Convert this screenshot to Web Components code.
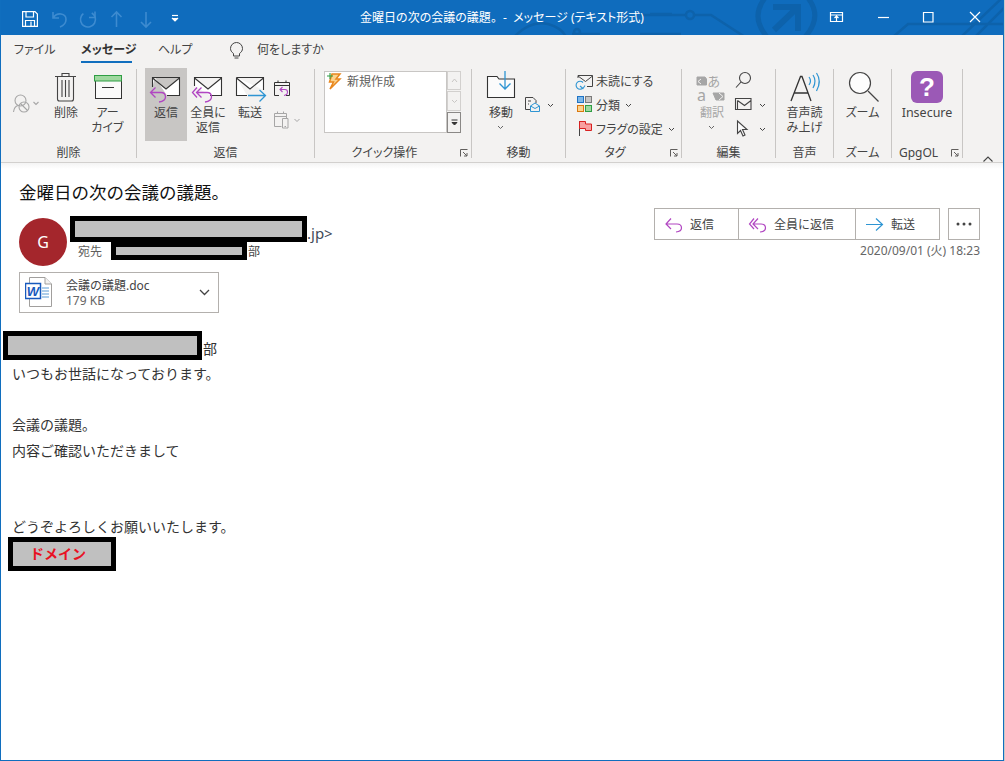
<!DOCTYPE html>
<html lang="ja">
<head>
<meta charset="utf-8">
<title>金曜日の次の会議の議題。</title>
<style>
html,body{margin:0;padding:0;background:#c8c8c8;width:1005px;height:761px;overflow:hidden}
body{font-family:"Noto Sans","Noto Sans CJK JP",sans-serif;font-size:12px;color:#444}
svg{display:block;overflow:visible}
</style>
</head>
<body>
<outlook-window>
  <title-bar>
    <svg slot="pattern" width="1003" height="35" viewBox="1 0 1003 35" fill="none" stroke="#0d62ab" stroke-width="2.5">
      <path d="M640 15H686M694 15H711L745 37"/><circle cx="690" cy="15" r="4"/><path d="M640 34H681"/>
      <path d="M765 -2Q750 17 767 37M808 -2Q823 17 805 37" stroke-width="5"/>
      <path d="M774 30L797 8M773 7H798V31" stroke-width="6"/>
      <path d="M1004 24H908L893 37M1002 -2L961 37M1004 8L975 37"/>
      <path d="M514 37Q530 20 548 24Q562 28 566 37"/><path d="M572 34H600M650 14H672"/><circle cx="577" cy="32" r="3"/>
    </svg>
    <svg slot="left" width="170" height="35" viewBox="15 0 170 35" fill="none" stroke="#fff" stroke-width="1.2">
      <path d="M22.6 11.6H35L37.4 14V26.4H22.6Z"/><path d="M26 11.6V17H33.5V11.6M25.5 26.4V20.5H34.5V26.4M31 21.5V26"/>
      <g stroke="#3d8bd0" stroke-width="1.6"><path d="M53 12V18H59M53.5 17.5C57 12 66 13 66 19.5C66 23 63.5 25.5 60 27"/>
      <circle cx="88" cy="19.500" r="7.500" stroke-dasharray="38 9" transform="rotate(-60 88 19.500)"/><path d="M95 11.500V17.500H89"/>
      <path d="M116.500 27V12M111.500 17L116.500 12L121.500 17M146 12V27M141 22L146 27L151 22"/></g>
      <path d="M172 15.500H178"/><path d="M172 18L175 21L178 18" fill="#fff"/>
    </svg>
    異
    <svg slot="right" width="160" height="35" viewBox="830 0 160 35" fill="none" stroke="#fff" stroke-width="1.2">
      <path d="M835.500 12.500H847.500V21.500H835.500ZM835.500 15H847.500M841.500 21V16.500M839.500 18L841.500 16L843.500 18"/>
      <path d="M883 17.500H894"/><path d="M928.500 12.500H938V22H928.500Z"/><path d="M975 12L985 22M985 12L975 22"/>
    </svg>
  </title-bar>
  <ribbon-tabs>
    <r-tab style="--w:38px;--mr:29px">ファイル</r-tab>
    <r-tab active style="--w:51px;--mr:26px">メッセージ</r-tab>
    <r-tab style="--w:32px;--mr:40px">ヘルプ</r-tab>
    <svg width="13" height="28" viewBox="230 35 13 28" fill="none" stroke="#444" stroke-width="1"><path d="M233.500 56V53.500C231.500 52 230.500 50.500 230.500 48.500A6 6 0 0 1 242.500 48.500C242.500 50.500 241.500 52 239.500 53.500V56ZM234.500 58H238.500"/></svg>
    <r-tab style="--w:66px;--mr:0;--ml:14px">何をしますか</r-tab>
  </ribbon-tabs>
  <ribbon-bar>
    <r-group label="削除" style="--w:136px">
      <svg width="46" height="73" viewBox="1 68 46 73" fill="none" stroke="#a6a6a6" stroke-width="1.1">
        <circle cx="20.500" cy="100.500" r="5.500"/><path d="M13.500 112C14 108 16 106 18 105.500"/><circle cx="24" cy="107" r="5"/><path d="M20.500 103.500L27.500 110.500"/><path d="M33.500 102L36 104.500L38.500 102"/>
      </svg>
      <r-btn style="--w:38px">
        <svg slot="icon" width="38" height="38" viewBox="47 68 38 38" fill="none" stroke="#444" stroke-width="1.1"><path d="M55 76.500H76M62 76V73.500H69V76M57.500 76.500V99Q57.500 101 59.500 101H71.500Q73.500 101 73.500 99V76.500M62 80V97M65.500 80V97M69 80V97"/></svg>
        削除
      </r-btn>
      <r-btn style="--w:45px">
        <svg slot="icon" width="45" height="38" viewBox="85 68 45 38"><rect x="95.500" y="75.500" width="26" height="23" fill="#fafafa" stroke="#333"/><rect x="94.500" y="75.500" width="27" height="5.500" fill="#9fd89f" stroke="#2f9e44"/><path d="M102 87.500H114" stroke="#333"/></svg>
        アー<br>カイブ
      </r-btn>
    </r-group>
    <r-group label="返信" style="--w:178px;--pl:8px">
      <r-btn active style="--w:42px">
        <svg slot="icon" width="42" height="38" viewBox="145 68 42 38" fill="none">
          <path d="M155 77.500H179.500V95.500H167M152.500 87V77.500H155M152.500 78L166 89L179.500 78" fill="#fff" stroke="#333" stroke-width="1.1"/>
          <path d="M155.500 87.500L150.500 92.500L155.500 97.500M150.500 92.500H161Q165.500 92.500 165.500 97Q165.500 101 159 102" stroke="#b146c2" stroke-width="1.3"/>
        </svg>
        返信
      </r-btn>
      <r-btn style="--w:42px">
        <svg slot="icon" width="42" height="38" viewBox="187 68 42 38" fill="none">
          <path d="M194.500 86V77.500H221.500V95.500H210M194.500 78L208 89L221.500 78" fill="#fff" stroke="#333" stroke-width="1.100"/>
          <path d="M197 87.500L192.500 92.500L197 97.500M201.500 87.500L196.500 92.500L201.500 97.500M196.500 92.500H207Q211.500 92.500 211.500 97Q211.500 101 205 102" stroke="#b146c2" stroke-width="1.3"/>
        </svg>
        全員に<br>返信
      </r-btn>
      <r-btn style="--w:42px">
        <svg slot="icon" width="42" height="38" viewBox="229 68 42 38" fill="none">
          <path d="M236.500 77.500H263.500V90M236.500 77.500V95.500H247M236.500 78L250 89L263.500 78" fill="#fff" stroke="#333" stroke-width="1.100"/>
          <path d="M248 95.500H265M259.500 90L265.500 95.500L259.500 101.500" stroke="#2e95d3" stroke-width="1.300"/>
        </svg>
        転送
      </r-btn>
      <r-col style="--pt:0px">
        <svg width="43" height="36" viewBox="271 68 43 36" fill="none" stroke="#333"><path d="M274.500 82.500H289.500V95.500H286M274.500 82.500V95.500H279M274.500 85.500H289.500M278 80.500V83M286 80.500V83" stroke-width="1"/><path d="M282.500 87L280 89.500L282.500 92M280 89.500H285Q287.500 89.500 287.500 92Q287.500 95 284 95.500" stroke="#b146c2" stroke-width="1.100"/></svg>
        <svg width="43" height="34" viewBox="271 104 43 34" fill="none" stroke="#a6a6a6"><path d="M274.500 113.500H286.500V118M274.500 113.500V126.500H281.500M274.500 116.500H286.500M277.500 111.500V114M283.500 111.500V114M282.500 118.500H288V128H282.500ZM284.500 126.500H286" stroke-width="1"/><path d="M294.500 119L297 121.500L299.500 119"/></svg>
      </r-col>
    </r-group>
    <r-group label="クイック操作" launcher style="--w:157px;--pl:9px">
      <quick-list>
        <svg slot="icon" width="17" height="19" viewBox="326 71 17 19" fill="none" stroke="#e8871e" stroke-width="1.500"><path d="M332 73H340L336 78H340L330 88L333.500 81H329.500Z" fill="#fbd38d"/><path d="M327 75H333M330 72V78" stroke="#2f9e44" stroke-width="1.100"/></svg>
        新規作成
      </quick-list>
    </r-group>
    <r-group label="移動" style="--w:94px;--pl:8px">
      <r-btn style="--w:42px">
        <svg slot="icon" width="42" height="38" viewBox="480 68 42 38" fill="none"><path d="M487.500 97.500V76.500H497L499 79H514.500V97.500Z" fill="#fbfbfb" stroke="#333" stroke-width="1.100"/><path d="M505 71V89M499.500 83.500L505 89L510.500 83.500" stroke="#2e95d3" stroke-width="1.300"/></svg>
        移動<r-chev block></r-chev>
      </r-btn>
      <r-col style="--pt:25px">
        <r-small chev><svg slot="icon" width="20" height="24" viewBox="524 93 20 24" fill="none" stroke="#444"><path d="M532 109.500H527.500V97.500H535L538 100.500V103" stroke-width="1"/><path d="M530 101H533M530 104H531" stroke-width="1"/><path d="M532.500 106L537 103L541.500 106V111.500H532.500ZM532.500 106L537 108.500L541.500 106" stroke="#2e95d3" stroke-width="1"/></svg></r-small>
      </r-col>
    </r-group>
    <r-group label="タグ" launcher style="--w:116px;--pl:10px">
      <r-col style="--pt:1px">
        <r-small><svg slot="icon" width="20" height="24" viewBox="576 69 20 24" fill="none" stroke="#444"><path d="M581 75.500H592.500V86.500H587M578 78V75.500H581M578 76L585.500 81.500L592.500 76" stroke-width="1"/><path d="M583 82.500A4 4 0 1 0 583 88M580 86L583 88.500L585 85.500" stroke="#2e95d3" stroke-width="1.100"/></svg>未読にする</r-small>
        <r-small chev><svg slot="icon" width="20" height="24" viewBox="576 93 20 24"><rect x="577.500" y="96.500" width="6" height="6" fill="#7fb8e8" stroke="#1f73c4"/><rect x="585.500" y="96.500" width="6" height="6" fill="#c8c6c4" stroke="#7a7a7a"/><rect x="577.500" y="105.500" width="6" height="6" fill="#fbd38d" stroke="#d9780f"/><rect x="585.500" y="105.500" width="6" height="6" fill="#9fd89f" stroke="#2f9e44"/></svg>分類</r-small>
        <r-small chev><svg slot="icon" width="20" height="24" viewBox="576 117 20 24" fill="none"><path d="M579.500 121V136" stroke="#444"/><path d="M579.500 121.500H585.500V124H591.500V130.500H585.500V128.500H579.500Z" fill="#f8a0a0" stroke="#d92020"/></svg>フラグの設定</r-small>
      </r-col>
    </r-group>
    <r-group label="編集" style="--w:94px;--pl:10px">
      <r-btn disabled style="--w:40px">
        <svg slot="icon" width="40" height="38" viewBox="692 68 40 38" fill="none" stroke="#a6a6a6">
          <path d="M697 77H705L706.500 79V85H697Z" fill="#a6a6a6"/><path d="M701 79L698 81.500L701 84" stroke="#f3f2f1"/>
          <text x="707.500" y="86" font-family="Noto Sans CJK JP" font-size="13" fill="#a6a6a6" stroke="none">あ</text>
          <text x="697" y="101" font-family="Noto Sans" font-size="16" fill="#a6a6a6" stroke="none">a</text>
          <path d="M713 93H724V100H716Z" fill="#a6a6a6"/><path d="M719 93L723 96.500L719 100" stroke="#f3f2f1"/>
        </svg>
        翻訳<r-chev block></r-chev>
      </r-btn>
      <r-col style="--pt:1px">
        <r-small><svg slot="icon" width="22" height="24" viewBox="732 69 22 24" fill="none" stroke="#444" stroke-width="1.100"><circle cx="745" cy="78" r="5.500"/><path d="M741 82L736 87.500"/></svg></r-small>
        <r-small chev><svg slot="icon" width="22" height="24" viewBox="732 93 22 24" fill="none" stroke="#444" stroke-width="1.100"><path d="M735.500 98.500H751V109.500H735.500ZM737.500 100.500V109.500M737.500 100.500L744.500 105.500L751 100.500"/></svg></r-small>
        <r-small chev><svg slot="icon" width="22" height="24" viewBox="732 117 22 24" fill="none" stroke="#444" stroke-width="1.100"><path d="M737.500 121V133.500L740.500 130.500L743 136L745 135L742.500 129.500H747Z" fill="#fbfbfb"/></svg></r-small>
      </r-col>
    </r-group>
    <r-group label="音声" style="--w:58px">
      <r-btn style="--w:57px">
        <svg slot="icon" width="57" height="38" viewBox="776 68 57 38" fill="none"><path d="M791 101L800.500 76.500H802L811 101M794 93H808" stroke="#333" stroke-width="1.300"/><path d="M809 77Q812 81 809 85M813 75Q817 81 813 88M816.500 73Q822 81 816.500 91" stroke="#2e95d3" stroke-width="1.200"/></svg>
        音声読<br>み上げ
      </r-btn>
    </r-group>
    <r-group label="ズーム" style="--w:58px">
      <r-btn style="--w:57px">
        <svg slot="icon" width="57" height="38" viewBox="834 68 57 38" fill="none" stroke="#444" stroke-width="1.200"><circle cx="860" cy="83" r="10.500" fill="#fdfdfd"/><path d="M868 91L878.500 101.500"/></svg>
        ズーム
      </r-btn>
    </r-group>
    <r-group label="GpgOL" launcher style="--w:71px">
      <r-btn style="--w:70px">
        <svg slot="icon" width="70" height="38" viewBox="892 68 70 38"><rect x="911" y="71" width="32" height="32" rx="6" fill="#9b59b6"/><text x="927" y="96" text-anchor="middle" font-family="Liberation Sans" font-weight="700" font-size="26" fill="#fff">?</text></svg>
        <span style="font-size:12.500px">Insecure</span>
      </r-btn>
    </r-group>
    <r-collapse></r-collapse>
  </ribbon-bar>
  <mail-view>
    <mail-subject>金曜日の次の会議の議題。</mail-subject>
    <mail-header>
      <sender-block>
        <span slot="initial">G</span>
        <red-act slot="from" style="--w:237px;--h:26px"></red-act>
        <span slot="tail">.jp&gt;</span>
        <red-act slot="to" style="--w:136px;--h:18px"></red-act>
        <span slot="suffix">部</span>
      </sender-block>
      <action-block>
        <mail-actions>
          <mail-action style="--w:84px"><svg slot="icon" width="17" height="17" viewBox="666 215 17 17" fill="none" stroke="#b146c2" stroke-width="1.200"><path d="M672 217.500L667 223L672 228M667 223H678Q682.500 223 682.500 227Q682.500 230.500 677 231"/></svg>返信</mail-action>
          <mail-action style="--w:117px"><svg slot="icon" width="17" height="17" viewBox="750 215 17 17" fill="none" stroke="#b146c2" stroke-width="1.200"><path d="M755 217.500L750.500 223L755 228M759 217.500L754 223L759 228M754 223H762Q766.500 223 766.500 227Q766.500 230.500 761 231"/></svg>全員に返信</mail-action>
          <mail-action last style="--w:83px"><svg slot="icon" width="17" height="17" viewBox="868 215 17 17" fill="none" stroke="#2e95d3" stroke-width="1.200"><path d="M868 223.500H884M878 217.500L884.500 223.500L878 229.500"/></svg>転送</mail-action>
        </mail-actions>
        <mail-more></mail-more>
        <span slot="time">2020/09/01 (火) 18:23</span>
      </action-block>
    </mail-header>
    <mail-attachment name="会議の議題.doc" size="179 KB"></mail-attachment>
    <mail-body>
      <body-first><red-act slot="box" style="--w:199px;--h:29px"></red-act>部</body-first>
      <body-line>いつもお世話になっております。</body-line>
      <body-line></body-line>
      <body-line>会議の議題。</body-line>
      <body-line>内容ご確認いただきまして</body-line>
      <body-line></body-line>
      <body-line></body-line>
      <body-line>どうぞよろしくお願いいたします。</body-line>
      <body-sign><red-act style="--w:108px;--h:34px"><span style="display:block;padding-left:17px;line-height:22px;color:#e81123;font-weight:700;font-size:14px;font-family:'Noto Sans CJK JP',sans-serif">ドメイン</span></red-act></body-sign>
    </mail-body>
  </mail-view>
</outlook-window>
<script>
function def(name, html, extra){
  const t=document.createElement('template');t.innerHTML=html;
  class C extends HTMLElement{
    constructor(){super();this.attachShadow({mode:'open'}).appendChild(t.content.cloneNode(true));}
    connectedCallback(){if(extra)extra(this);}
  }
  customElements.define(name,C);
}
const JP='"Noto Sans","Noto Sans CJK JP",sans-serif';
const chevron=c=>`<svg width="7" height="5" viewBox="0 0 7 5" fill="none" stroke="${c}" style="display:block"><path d="M1 1L3.5 3.500L6 1"/></svg>`;

def('outlook-window',`<style>:host{display:flex;flex-direction:column;box-sizing:border-box;width:1004px;height:761px;border:1px solid #106ebe;border-top:0;background:#fff;overflow:hidden}</style><slot></slot>`);

def('title-bar',`<style>
:host{display:grid;grid-template-columns:1fr auto 1fr;align-items:center;height:35px;flex:none;background:#0f6cbd;position:relative;color:#fff;overflow:hidden}
.pat{position:absolute;inset:0}
.l,.r,.t{position:relative;display:flex}
.r{justify-content:flex-end;padding-right:18px}
.l{padding-left:14px}
.t{font:12px ${JP};font-feature-settings:"palt";white-space:pre;line-height:35px}
</style><div class="pat"><slot name="pattern"></slot></div><div class="l"><slot name="left"></slot></div><div class="t">金曜日の次の会議の議題。  -  メッセージ (テキスト形式)</div><div class="r"><slot name="right"></slot></div><slot hidden></slot>`);

def('ribbon-tabs',`<style>:host{display:flex;align-items:stretch;height:28px;flex:none;background:#f3f2f1;padding-left:13px;font:12px ${JP};font-feature-settings:"palt";color:#444}</style><slot></slot>`);

def('r-tab',`<style>
:host{display:block;box-sizing:border-box;width:var(--w);margin-right:var(--mr);margin-left:var(--ml,0);height:28px;line-height:30px;text-align:center;white-space:nowrap;border-bottom:2px solid transparent;margin-bottom:0}
:host([active]){font-weight:700;border-bottom-color:#106ebe;color:#333}
</style><slot></slot>`);

def('ribbon-bar',`<style>:host{display:flex;box-sizing:border-box;height:100px;flex:none;padding-top:5px;background:#f3f2f1;border-bottom:1px solid #d2d0ce;font:12px ${JP};font-feature-settings:"palt";color:#444}</style><slot></slot>`);

def('r-group',`<style>
:host{display:flex;box-sizing:border-box;width:var(--w);height:94px;flex:none}
.in{flex:1;min-width:0;display:flex;flex-direction:column}
.c{display:flex;height:73px;padding-left:var(--pl,0);box-sizing:border-box}
.f{display:flex;padding-top:3px;line-height:18px;height:21px;box-sizing:border-box}
.lb{flex:1;text-align:center;white-space:nowrap}
.la{width:17px;display:none;flex:none;align-items:center}
:host([launcher]) .la{display:flex}
.sep{width:1px;background:#c8c6c4;margin:1px 0 4px;flex:none}
</style><div class="in"><div class="c"><slot></slot></div><div class="f"><div class="lb"></div><div class="la"><svg width="8" height="8" viewBox="0 0 8 8" fill="none" stroke="#605e5c" style="margin-left:6px;display:block"><path d="M.5 7.500V.5H7.500M3 3L7 7M7 4V7H4"/></svg></div></div></div><div class="sep"></div>`,
el=>{el.shadowRoot.querySelector('.lb').textContent=el.getAttribute('label');});

def('r-btn',`<style>
:host{display:flex;flex-direction:column;align-items:center;box-sizing:border-box;width:var(--w);height:73px;flex:none;text-align:center;line-height:14.5px;color:#444}
:host([active]){background:#c8c6c4}
:host([disabled]){color:#a6a6a6}
.i{height:38px;flex:none}
.t{white-space:nowrap}
</style><div class="i"><slot name="icon"></slot></div><div class="t"><slot></slot></div>`);

def('r-col',`<style>:host{display:flex;flex-direction:column;padding-top:var(--pt,0);flex:none}</style><slot></slot>`);

def('r-small',`<style>
:host{display:flex;align-items:center;height:24px;white-space:nowrap;color:#444}
.c{display:none;margin-left:5px}
:host([chev]) .c{display:block}
</style><slot name="icon"></slot><slot></slot><span class="c">${chevron('#444')}</span>`);

def('r-chev',`<style>:host{display:block;width:7px;margin:4px auto 0}</style>${chevron('#666')}`);

def('quick-list',`<style>
:host{display:flex;margin-top:3px;height:62px;flex:none;gap:0}
.box{box-sizing:border-box;width:123px;height:62px;background:#fff;border:1px solid #c8c6c4;display:flex;align-items:flex-start;padding-left:1px;color:#605e5c}
.t{margin-left:4px;line-height:20px}
.s{display:flex;flex-direction:column;width:14px;gap:1px}
.b{box-sizing:border-box;border:1px solid #d2d0ce;background:#f3f2f1;display:flex;align-items:center;justify-content:center;flex:1}
.b.m{border-color:#8a8886;flex:1.1}
</style><div class="box"><slot name="icon"></slot><div class="t"><slot></slot></div></div><div class="s"><div class="b"><svg width="7" height="5" viewBox="0 0 7 5" fill="none" stroke="#c8c6c4"><path d="M1 4L3.500 1L6 4"/></svg></div><div class="b">${chevron('#c8c6c4')}</div><div class="b m"><svg width="7" height="7" viewBox="0 0 7 7" fill="#333" stroke="#333"><path d="M.5 1H6.500" fill="none"/><path d="M1 3.500H6L3.500 6Z"/></svg></div></div>`);

def('r-collapse',`<style>:host{display:block;flex:1;position:relative}
.w{display:flex;justify-content:flex-end;padding:88px 10px 0 0}</style><div class="w"><svg width="10" height="6" viewBox="0 0 10 6" fill="none" stroke="#444" stroke-width="1.100"><path d="M.5 5.500L5 1L9.500 5.500"/></svg></div>`);

def('mail-view',`<style>:host{display:flex;flex-direction:column;flex:1;min-height:0;background:linear-gradient(#f4f4f4,#fff 6px);padding:17px 0 0 18px;font:12px ${JP};color:#444}</style><slot></slot>`);

def('mail-subject',`<style>:host{display:block;height:24px;line-height:24px;font-size:17.500px;font-family:"Noto Sans CJK JP",sans-serif;color:#111;white-space:nowrap}</style><slot></slot>`);

def('mail-header',`<style>:host{display:flex;justify-content:space-between;margin-top:4px;padding-right:23px;height:58px}</style><slot></slot>`);

def('sender-block',`<style>
:host{display:flex;align-items:flex-start}
.av{width:48px;height:48px;border-radius:50%;background:#a4262c;color:#fff;font-size:16px;display:flex;align-items:center;justify-content:center;margin-top:10px;flex:none}
.c{margin:8px 0 0 3px}
.r1{display:flex;height:26px;align-items:center;font-size:15px;color:#404a58}
.r1 span{display:block;padding-top:9px;line-height:17px}
.r2{display:flex;height:18px;align-items:center;color:#444}
.lb{width:41px;padding-left:8px;box-sizing:border-box;color:#605e5c;flex:none}
.s{margin-left:1px;font-size:12px}
</style><div class="av"><slot name="initial"></slot></div><div class="c"><div class="r1"><slot name="from"></slot><span><slot name="tail"></slot></span></div><div class="r2"><div class="lb">宛先</div><slot name="to"></slot><div class="s"><slot name="suffix"></slot></div></div></div>`);

def('red-act',`<style>:host{display:block;box-sizing:border-box;width:var(--w);height:var(--h);border:5px solid #000;background:#c0c0c0;flex:none}</style><slot></slot>`);

def('action-block',`<style>
:host{display:grid;grid-template-columns:auto auto;column-gap:8px;justify-content:end;align-content:start}
.t{grid-column:1 / span 2;text-align:right;margin-top:3px;line-height:16px;color:#666;white-space:nowrap}
</style><slot></slot><div class="t"><slot name="time"></slot></div>`);

def('mail-actions',`<style>:host{display:flex;box-sizing:border-box;height:32px;border:1px solid #b3b0ad;background:#fff}</style><slot></slot>`);

def('mail-action',`<style>
:host{display:flex;align-items:center;box-sizing:border-box;width:var(--w);padding-left:10px;gap:8px;border-right:1px solid #b3b0ad;color:#444;white-space:nowrap}
:host([last]){border-right:0;width:var(--w)}
</style><slot name="icon"></slot><slot></slot>`);

def('mail-more',`<style>:host{display:flex;align-items:center;justify-content:center;box-sizing:border-box;width:32px;height:32px;border:1px solid #b3b0ad;background:#fff}</style><svg width="16" height="4" viewBox="0 0 16 4" fill="#444" style="display:block"><circle cx="2" cy="2" r="1.500"/><circle cx="8" cy="2" r="1.500"/><circle cx="14" cy="2" r="1.500"/></svg>`);

def('mail-attachment',`<style>
:host{display:flex;align-items:center;box-sizing:border-box;width:200px;height:41px;margin-top:6px;border:1px solid #b3b0ad;background:#fff;position:relative}
.i{margin-left:5px;flex:none}
.tx{margin-left:13px;flex:1;line-height:15px;color:#444;white-space:nowrap}
.sz{color:#666}
.ch{margin-right:8px}
</style><svg class="i" width="28" height="31" viewBox="25 277 28 31" style="display:block">
<path d="M29.500 277.500H45L51.500 284V306.500H29.500Z" fill="#fff" stroke="#a19f9d"/><path d="M45 277.500V284H51.500" fill="#f3f2f1" stroke="#a19f9d"/>
<path d="M42 288H49M42 291H49M42 294H49M42 297H49" stroke="#5b9bd5"/>
<rect x="25.500" y="283.500" width="15" height="15" fill="#fff" stroke="#185abd" stroke-width="1.500"/>
<text x="33" y="296" text-anchor="middle" font-family="Liberation Sans" font-weight="700" font-style="italic" font-size="13" fill="#185abd">W</text></svg>
<div class="tx"><div class="n"></div><div class="sz"></div></div><svg class="ch" width="11" height="7" viewBox="0 0 11 7" fill="none" stroke="#444" stroke-width="1.300" style="display:block"><path d="M1 1L5.500 5.500L10 1"/></svg>`,
el=>{el.shadowRoot.querySelector('.n').textContent=el.getAttribute('name');el.shadowRoot.querySelector('.sz').textContent=el.getAttribute('size');});

def('mail-body',`<style>:host{display:block;margin:18px 0 0 -16px;font:14px "Noto Sans CJK JP",sans-serif;color:#333}</style><slot></slot>`);

def('body-first',`<style>:host{display:flex;height:30px}
.t{line-height:26px;margin-top:4px;margin-left:1px}</style><slot name="box"></slot><div class="t"><slot></slot></div>`);

def('body-line',`<style>:host{display:block;height:25.500px;line-height:25.500px;padding-left:9px;white-space:nowrap}</style><slot></slot>`);

def('body-sign',`<style>:host{display:block;margin:-2.500px 0 0 5px}</style><slot></slot>`);
</script>
</body>
</html>
